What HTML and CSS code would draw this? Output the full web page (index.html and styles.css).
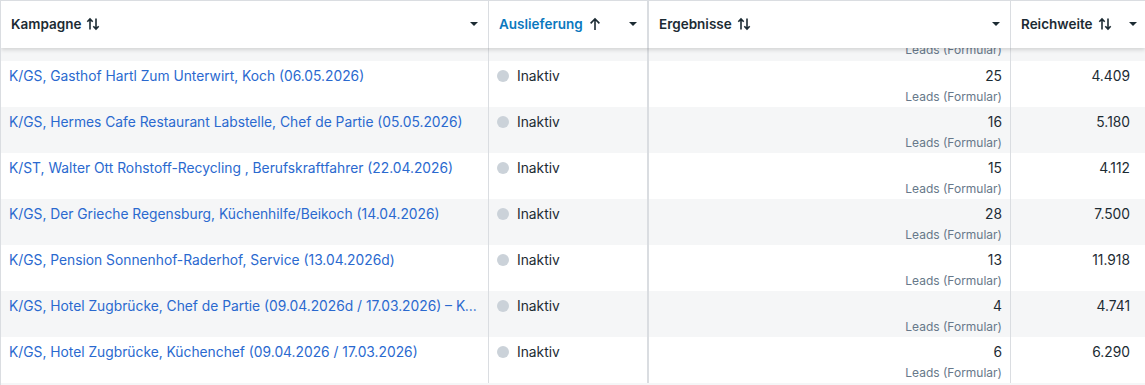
FILE: index.html
```html
<!DOCTYPE html>
<html lang="de">
<head>
<meta charset="utf-8">
<link rel="stylesheet" href="styles.css">
</head>
<body>
<div class="table">
  <div class="head">
    <div class="hcell c1"><span class="htitle">Kampagne</span><svg class="sort" viewBox="0 0 14 14"><path d="M4 12.5V2M1.3 4.8L4 2l2.7 2.8M10 1.5V12M7.3 9.2L10 12l2.7-2.8" fill="none" stroke="currentColor" stroke-width="1.6"/></svg><span class="grow"></span><span class="caret"></span></div>
    <div class="hcell c2 active"><span class="htitle">Auslieferung</span><svg class="sort up" viewBox="0 0 14 14"><path d="M7 13V2M2.6 6.4L7 2l4.4 4.4" fill="none" stroke="currentColor" stroke-width="1.6"/></svg><span class="grow"></span><span class="caret"></span></div>
    <div class="hcell c3"><span class="htitle">Ergebnisse</span><svg class="sort" viewBox="0 0 14 14"><path d="M4 12.5V2M1.3 4.8L4 2l2.7 2.8M10 1.5V12M7.3 9.2L10 12l2.7-2.8" fill="none" stroke="currentColor" stroke-width="1.6"/></svg><span class="grow"></span><span class="caret"></span></div>
    <div class="hcell c4"><span class="htitle">Reichweite</span><svg class="sort" viewBox="0 0 14 14"><path d="M4 12.5V2M1.3 4.8L4 2l2.7 2.8M10 1.5V12M7.3 9.2L10 12l2.7-2.8" fill="none" stroke="currentColor" stroke-width="1.6"/></svg><span class="grow"></span><span class="caret"></span></div>
  </div>
  <div class="rows">
    <div class="row alt partial">
      <div class="cell c1"></div>
      <div class="cell c2"></div>
      <div class="cell c3 num"><span class="sub">Leads (Formular)</span></div>
      <div class="cell c4 num"></div>
    </div>
    <div class="row">
      <div class="cell c1"><a class="link">K/GS, Gasthof Hartl Zum Unterwirt, Koch (06.05.2026)</a></div>
      <div class="cell c2"><span class="dot"></span>Inaktiv</div>
      <div class="cell c3 num"><span>25</span><span class="sub">Leads (Formular)</span></div>
      <div class="cell c4 num"><span>4.409</span></div>
    </div>
    <div class="row alt">
      <div class="cell c1"><a class="link">K/GS, Hermes Cafe Restaurant Labstelle, Chef de Partie (05.05.2026)</a></div>
      <div class="cell c2"><span class="dot"></span>Inaktiv</div>
      <div class="cell c3 num"><span>16</span><span class="sub">Leads (Formular)</span></div>
      <div class="cell c4 num"><span>5.180</span></div>
    </div>
    <div class="row">
      <div class="cell c1"><a class="link">K/ST, Walter Ott Rohstoff-Recycling , Berufskraftfahrer (22.04.2026)</a></div>
      <div class="cell c2"><span class="dot"></span>Inaktiv</div>
      <div class="cell c3 num"><span>15</span><span class="sub">Leads (Formular)</span></div>
      <div class="cell c4 num"><span>4.112</span></div>
    </div>
    <div class="row alt">
      <div class="cell c1"><a class="link">K/GS, Der Grieche Regensburg, Küchenhilfe/Beikoch (14.04.2026)</a></div>
      <div class="cell c2"><span class="dot"></span>Inaktiv</div>
      <div class="cell c3 num"><span>28</span><span class="sub">Leads (Formular)</span></div>
      <div class="cell c4 num"><span>7.500</span></div>
    </div>
    <div class="row">
      <div class="cell c1"><a class="link">K/GS, Pension Sonnenhof-Raderhof, Service (13.04.2026d)</a></div>
      <div class="cell c2"><span class="dot"></span>Inaktiv</div>
      <div class="cell c3 num"><span>13</span><span class="sub">Leads (Formular)</span></div>
      <div class="cell c4 num"><span>11.918</span></div>
    </div>
    <div class="row alt">
      <div class="cell c1"><a class="link">K/GS, Hotel Zugbrücke, Chef de Partie (09.04.2026d / 17.03.2026) – Koch</a></div>
      <div class="cell c2"><span class="dot"></span>Inaktiv</div>
      <div class="cell c3 num"><span>4</span><span class="sub">Leads (Formular)</span></div>
      <div class="cell c4 num"><span>4.741</span></div>
    </div>
    <div class="row">
      <div class="cell c1"><a class="link">K/GS, Hotel Zugbrücke, Küchenchef (09.04.2026 / 17.03.2026)</a></div>
      <div class="cell c2"><span class="dot"></span>Inaktiv</div>
      <div class="cell c3 num"><span>6</span><span class="sub">Leads (Formular)</span></div>
      <div class="cell c4 num"><span>6.290</span></div>
    </div>
    <div class="row alt"></div>
  </div>
</div>
</body>
</html>
```

FILE: styles.css
```css
* { box-sizing: border-box; }
html, body { margin: 0; padding: 0; background: #fff; }
body {
  font-family: Inter, "Noto Sans", sans-serif;
  color: #1c2b33;
  width: 1145px;
  height: 385px;
  overflow: hidden;
}
.table {
  display: flex;
  flex-direction: column;
  height: 385px;
  border-left: 1px solid #dadde1;
  overflow: hidden;
}
.head {
  display: grid;
  grid-template-columns: 488px 160px 362px 134px;
  height: 48px;
  border-top: 1px solid #dadde1;
  background: #fff;
  position: relative;
  z-index: 2;
  box-shadow: 0 2px 4px rgba(0, 0, 0, 0.14);
  flex: none;
}
.hcell {
  display: flex;
  align-items: center;
  padding: 0 10px 1px 10px;
  font-size: 13.5px;
  line-height: 20px;
  font-weight: 600;
  color: #1c2b33;
  border-right: 1px solid #dadde1;
}
.hcell.c2 { border-right-width: 2px; }
.hcell.c4 { border-right: none; padding-right: 8px; }
.hcell.active { color: #0a78be; }
.hcell.active .sort { color: #1c2b33; }
.sort { width: 14px; height: 14px; margin-left: 5px; color: #1c2b33; flex: none; }
.grow { flex: 1; }
.caret {
  width: 0; height: 0;
  border-left: 4px solid transparent;
  border-right: 4px solid transparent;
  border-top: 4px solid #1c2b33;
  flex: none;
}
.rows {
  flex: 1;
  overflow: hidden;
}
.row {
  display: grid;
  grid-template-columns: 488px 160px 362px 134px;
  height: 46px;
  background: #fff;
}
.row.alt { background: #f5f6f7; }
.row.partial { height: 13px; overflow: hidden; }
.row.partial .cell { padding-top: 0; }
.row.partial .sub { margin-top: -6px; }
.cell {
  padding: 6px 8px 0 8px;
  font-size: 13.8px;
  line-height: 18px;
  border-right: 1px solid #dadde1;
  min-width: 0;
}
.cell.c2 { border-right: 2px solid #dadde1; display: flex; align-items: flex-start; padding-left: 8px; }
.cell.c4 { border-right: none; padding-right: 15px; }
.link {
  color: #2a69cf;
  display: block;
  white-space: nowrap;
  overflow: hidden;
  text-overflow: ellipsis;
  padding-right: 3px;
}
.dot {
  width: 12px; height: 12px;
  border-radius: 50%;
  background: #cbd2d9;
  margin: 3px 8px 0 0;
  flex: none;
}
.num {
  display: flex;
  flex-direction: column;
  align-items: flex-end;
  padding-right: 8px;
}
.sub {
  font-size: 12px;
  line-height: 16px;
  color: #67788a;
  margin-top: 4px;
}
```
